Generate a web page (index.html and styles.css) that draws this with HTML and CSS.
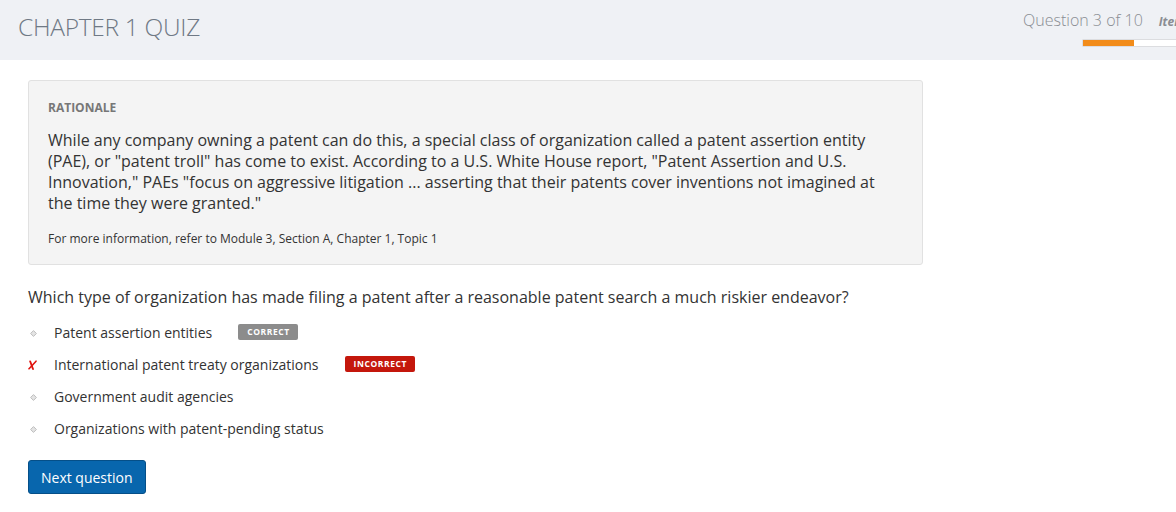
FILE: index.html
```html
<!DOCTYPE html>
<html>
<head>
<meta charset="utf-8">
<link rel="stylesheet" href="styles.css">
</head>
<body>
<header class="topbar">
  <h1 class="title">CHAPTER 1 QUIZ</h1>
  <div class="status">
    <div class="status-row">
      <span class="qcount">Question 3 of 10</span>
      <span class="items">Items</span>
    </div>
    <div class="progress"><div class="progress-fill" style="width:51px"></div></div>
  </div>
</header>
<main class="content">
  <section class="rationale">
    <div class="rationale-label">RATIONALE</div>
    <p class="rationale-text">While any company owning a patent can do this, a special class of organization called a patent assertion entity (PAE), or "patent troll" has come to exist. According to a U.S. White House report, "Patent Assertion and U.S. Innovation," PAEs "focus on aggressive litigation ... asserting that their patents cover inventions not imagined at the time they were granted."</p>
    <p class="rationale-ref">For more information, refer to Module 3, Section A, Chapter 1, Topic 1</p>
  </section>
  <p class="question">Which type of organization has made filing a patent after a reasonable patent search a much riskier endeavor?</p>
  <ul class="options">
    <li class="option">
      <span class="marker"><svg width="7" height="7" viewBox="0 0 7 7"><path d="M3.5 0.6 L6.4 3.5 L3.5 6.4 L0.6 3.5 Z" fill="#e4e4e4" stroke="#bdbdbd" stroke-width="1"/></svg></span>
      <span class="opt-text">Patent assertion entities</span>
      <span class="badge badge-correct">CORRECT</span>
    </li>
    <li class="option">
      <span class="marker"><svg width="9" height="10" viewBox="0 0 9 10"><path d="M2.2 1.5 C3.2 4 4 6.5 5 9" stroke="#e0140e" stroke-width="1.9" fill="none" stroke-linecap="round"/><path d="M8 1.2 C5.8 3.6 3.6 6.2 1 8.8" stroke="#e0140e" stroke-width="1.6" fill="none" stroke-linecap="round"/></svg></span>
      <span class="opt-text">International patent treaty organizations</span>
      <span class="badge badge-incorrect">INCORRECT</span>
    </li>
    <li class="option">
      <span class="marker"><svg width="7" height="7" viewBox="0 0 7 7"><path d="M3.5 0.6 L6.4 3.5 L3.5 6.4 L0.6 3.5 Z" fill="#e4e4e4" stroke="#bdbdbd" stroke-width="1"/></svg></span>
      <span class="opt-text">Government audit agencies</span>
    </li>
    <li class="option">
      <span class="marker"><svg width="7" height="7" viewBox="0 0 7 7"><path d="M3.5 0.6 L6.4 3.5 L3.5 6.4 L0.6 3.5 Z" fill="#e4e4e4" stroke="#bdbdbd" stroke-width="1"/></svg></span>
      <span class="opt-text">Organizations with patent-pending status</span>
    </li>
  </ul>
  <button class="next-btn">Next question</button>
</main>
</body>
</html>
```
FILE: styles.css
```css
html, body {
  margin: 0;
  padding: 0;
  overflow: hidden;
  background: #ffffff;
  font-family: "Open Sans", "Noto Sans", sans-serif;
  color: #333333;
}
.topbar {
  height: 60px;
  background: #eff1f5;
  display: flex;
  justify-content: space-between;
  overflow: hidden;
}
.title {
  margin: 0;
  padding: 10px 0 0 18px;
  font-size: 24.5px;
  font-weight: 300;
  line-height: 34px;
  color: #6f7985;
  letter-spacing: -0.3px;
}
.status {
  width: 153px;
  flex: none;
  padding-top: 9px;
  white-space: nowrap;
}
.status-row {
  display: flex;
  align-items: baseline;
  height: 22px;
}
.qcount {
  font-size: 16px;
  font-weight: 300;
  color: #8a8d93;
  line-height: 22px;
}
.items {
  margin-left: 16px;
  font-size: 12px;
  font-weight: 700;
  font-style: italic;
  color: #8a8d93;
}
.progress {
  margin: 8px 0 0 59px;
  height: 8px;
  width: 120px;
  background: #ffffff;
  border: 1px solid #dcdde0;
  border-radius: 1px;
  box-sizing: border-box;
}
.progress-fill {
  height: 100%;
  background: #f28c1a;
}
.content {
  padding: 20px 28px 0 28px;
}
.rationale {
  width: 895px;
  box-sizing: border-box;
  background: #f4f4f4;
  border: 1px solid #e1e1e1;
  border-radius: 3px;
  padding: 19px 19px 17px 19px;
}
.rationale-label {
  font-size: 12px;
  font-weight: 700;
  color: #777777;
  line-height: 16px;
}
.rationale-text {
  margin: 14px 0 0 0;
  max-width: 840px;
  font-size: 16px;
  line-height: 21px;
  color: #333333;
}
.rationale-ref {
  margin: 17px 0 0 0;
  font-size: 12px;
  line-height: 16px;
  color: #333333;
}
.question {
  margin: 21px 0 0 0;
  font-size: 16px;
  line-height: 22px;
  color: #333333;
}
.options {
  list-style: none;
  margin: 9px 0 0 0;
  padding: 0;
}
.option {
  display: flex;
  align-items: center;
  height: 32px;
  font-size: 14px;
  color: #333333;
}
.marker {
  width: 26px;
  flex: none;
  display: flex;
  align-items: center;
  padding-left: 2px;
  box-sizing: border-box;
}
.option:nth-child(2) .marker {
  padding-left: 0;
}
.opt-text {
  line-height: 20px;
}
.badge {
  margin-left: 26px;
  height: 16px;
  line-height: 16px;
  padding: 0 8px 0 9px;
  font-size: 8.5px;
  font-weight: 700;
  letter-spacing: 0.6px;
  color: #ffffff;
  border-radius: 2px;
  position: relative;
  top: -1px;
}
.badge-correct {
  background: #8c8c8c;
}
.badge-incorrect {
  background: #c4170c;
}
.next-btn {
  margin-top: 15px;
  height: 34px;
  padding: 0 12px;
  font-family: "Open Sans", "Noto Sans", sans-serif;
  font-size: 14px;
  color: #ffffff;
  background: #0866ad;
  border: 1px solid #054f88;
  border-radius: 3px;
  cursor: pointer;
}
```
